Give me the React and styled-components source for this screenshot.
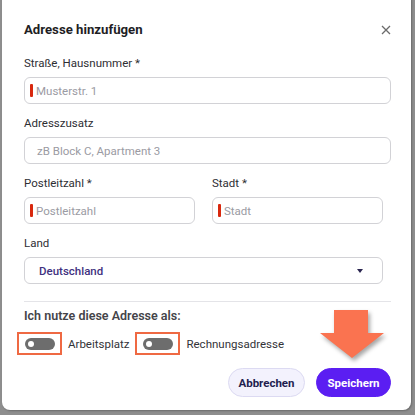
import React from "react";
import styled, { createGlobalStyle } from "styled-components";

const Global = createGlobalStyle`
  html, body { margin: 0; padding: 0; background: #8e8e8e; }
  body { font-family: Roboto, "Noto Sans", Arial, sans-serif; overflow: hidden; }
  * { box-sizing: border-box; }
`;

const Page = styled.div`
  width: 415px;
  height: 415px;
  padding: 0 4px 0 2px;
  overflow: hidden;
`;

const Modal = styled.div`
  position: relative;
  margin-top: -8px;
  height: 418px;
  background: #fff;
  border-radius: 8px;
  padding: 28px 20px 0 22px;
  display: flex;
  flex-direction: column;
  box-shadow: 1px 1px 2px rgba(0,0,0,0.25);
`;

const Header = styled.div`
  display: flex;
  align-items: center;
  justify-content: space-between;
  height: 20px;
  margin-bottom: 15px;
`;

const Title = styled.h2`
  margin: 0;
  font-size: 13.2px;
  font-weight: 700;
  color: #1e1e24;
  line-height: 20px;
`;

const Close = styled.button`
  border: 0;
  background: none;
  padding: 0;
  width: 12px;
  height: 12px;
  margin-right: -1px;
  display: flex;
  color: #6b6b6b;
`;

const Fields = styled.div`
  display: flex;
  flex-direction: column;
  gap: 11px;
`;

const Row = styled.div`
  display: grid;
  grid-template-columns: 171px 171px;
  column-gap: 17px;
`;

const Field = styled.div`
  display: flex;
  flex-direction: column;
  gap: 6px;
  margin-right: ${(p) => (p.$inset ? "8px" : "0")};
`;

const Label = styled.label`
  font-size: 11.5px;
  line-height: 16px;
  color: #2e2e33;
`;

const InputBox = styled.div`
  height: 27px;
  border: 1px solid #d2d2d6;
  border-radius: 6px;
  display: flex;
  align-items: center;
  padding-left: ${(p) => (p.$required ? "5px" : "12px")};
  gap: 3px;
`;

const RedBar = styled.span`
  width: 3px;
  height: 13px;
  background: #d8280e;
  border-radius: 1px;
`;

const Placeholder = styled.span`
  font-size: 11.5px;
  color: #9b9ba3;
`;

const Select = styled.div`
  height: 27px;
  border: 1px solid #d2d2d6;
  border-radius: 6px;
  display: flex;
  align-items: center;
  justify-content: space-between;
  padding: 0 19px 0 14px;
`;

const SelectValue = styled.span`
  font-size: 11.5px;
  font-weight: 500;
  color: #3f3180;
`;

const Caret = styled.span`
  width: 0;
  height: 0;
  border-left: 3px solid transparent;
  border-right: 3px solid transparent;
  border-top: 4px solid #2a2550;
`;

const Divider = styled.hr`
  border: 0;
  border-top: 1px solid #e4e4e8;
  margin: 17px 0 5px;
`;

const Question = styled.div`
  font-size: 12.5px;
  font-weight: 600;
  line-height: 18px;
  color: #444449;
`;

const ToggleRow = styled.div`
  display: flex;
  align-items: center;
  margin: 7px 0 0 -7px;
  height: 23px;
`;

const Highlight = styled.div`
  width: 45px;
  height: 23px;
  border: 2px solid #ef6943;
  display: flex;
  align-items: center;
  justify-content: center;
`;

const Toggle = styled.div`
  width: 30px;
  height: 12px;
  border-radius: 6px;
  background: #6d6d6d;
  position: relative;
  &::after {
    content: "";
    position: absolute;
    left: 3px;
    top: 3px;
    width: 6px;
    height: 6px;
    border-radius: 50%;
    background: #fff;
  }
`;

const ToggleLabel = styled.span`
  font-size: 11.5px;
  color: #333338;
  margin: 0 ${(p) => p.$after}px 0 6px;
`;

const Actions = styled.div`
  display: flex;
  justify-content: flex-end;
  gap: 11px;
  margin-top: 13px;
`;

const Button = styled.button`
  height: 29px;
  border-radius: 15px;
  font-family: inherit;
  font-size: 11.5px;
  font-weight: 700;
  padding: 0;
  width: ${(p) => p.$w}px;
  border: 1px solid ${(p) => (p.$primary ? "#5b1ef2" : "#dcdaf2")};
  background: ${(p) => (p.$primary ? "#5b1ef2" : "#f3f2fd")};
  color: ${(p) => (p.$primary ? "#fff" : "#221d4f")};
`;

const Arrow = styled.svg`
  position: absolute;
  right: 26px;
  top: 318px;
  filter: drop-shadow(2px 3px 2px rgba(0,0,0,0.35));
`;

function TextField({ label, placeholder, required }) {
  return (
    <Field>
      <Label>{label}</Label>
      <InputBox $required={required}>
        {required && <RedBar />}
        <Placeholder>{placeholder}</Placeholder>
      </InputBox>
    </Field>
  );
}

export default function App() {
  return (
    <Page>
      <Global />
      <Modal>
        <Header>
          <Title>Adresse hinzufügen</Title>
          <Close aria-label="close">
            <svg width="12" height="12" viewBox="0 0 12 12">
              <path d="M2 2L10 10M10 2L2 10" stroke="currentColor" strokeWidth="1.3" />
            </svg>
          </Close>
        </Header>
        <Fields>
          <TextField label="Straße, Hausnummer *" placeholder="Musterstr. 1" required />
          <TextField label="Adresszusatz" placeholder="zB Block C, Apartment 3" />
          <Row>
            <TextField label="Postleitzahl *" placeholder="Postleitzahl" required />
            <TextField label="Stadt *" placeholder="Stadt" required />
          </Row>
          <Field $inset>
            <Label>Land</Label>
            <Select>
              <SelectValue>Deutschland</SelectValue>
              <Caret />
            </Select>
          </Field>
        </Fields>
        <Divider />
        <Question>Ich nutze diese Adresse als:</Question>
        <ToggleRow>
          <Highlight><Toggle /></Highlight>
          <ToggleLabel $after={6}>Arbeitsplatz</ToggleLabel>
          <Highlight><Toggle /></Highlight>
          <ToggleLabel $after={0}>Rechnungsadresse</ToggleLabel>
        </ToggleRow>
        <Actions>
          <Button $w={77}>Abbrechen</Button>
          <Button $w={75} $primary>Speichern</Button>
        </Actions>
        <Arrow width="66" height="54" viewBox="0 0 66 54">
          <path d="M15 0H49V23H65L33 48L1 23H15Z" fill="#fa7350" />
        </Arrow>
      </Modal>
    </Page>
  );
}
